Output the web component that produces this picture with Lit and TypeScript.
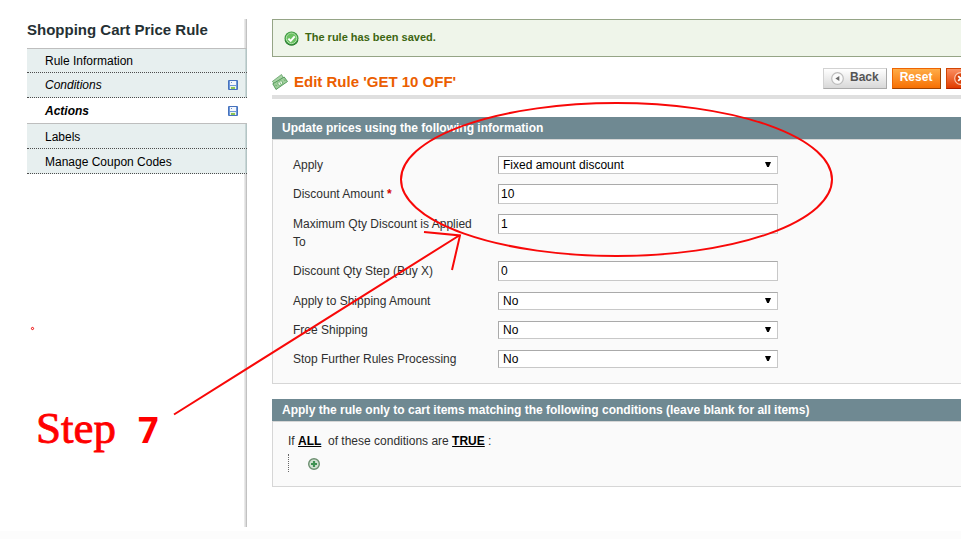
import { LitElement, html, svg, css, nothing } from "lit";
import { customElement } from "lit/decorators.js";
import { classMap } from "lit/directives/class-map.js";

interface Tab {
  label: string;
  changed?: boolean;
  active?: boolean;
}

interface Field {
  id: string;
  label: string;
  required?: boolean;
  value?: string;
  options?: string[];
}

const TABS: Tab[] = [
  { label: "Rule Information" },
  { label: "Conditions", changed: true },
  { label: "Actions", changed: true, active: true },
  { label: "Labels" },
  { label: "Manage Coupon Codes" },
];

const FIELDS: Field[] = [
  { id: "apply", label: "Apply", options: ["Fixed amount discount"] },
  { id: "amount", label: "Discount Amount", required: true, value: "10" },
  { id: "max-qty", label: "Maximum Qty Discount is Applied To", value: "1" },
  { id: "step", label: "Discount Qty Step (Buy X)", value: "0" },
  { id: "shipping", label: "Apply to Shipping Amount", options: ["No", "Yes"] },
  { id: "free", label: "Free Shipping", options: ["No", "Yes"] },
  { id: "stop", label: "Stop Further Rules Processing", options: ["No", "Yes"] },
];

const diskIcon = html`<svg width="10" height="10" viewBox="0 0 10 10" aria-hidden="true">
  <rect width="10" height="10" rx="1" fill="#4672bd" />
  <rect x="1" y="1" width="8" height="8" fill="#6d97da" />
  <rect x="2" y="1" width="6" height="4" fill="#f3f7fd" />
  <rect x="3" y="2" width="1" height="1" fill="#6f8fc9" />
  <rect x="2" y="6" width="6" height="3" fill="#eef5e6" />
  <rect x="3" y="7" width="4" height="2" fill="#8cc556" />
</svg>`;

const checkIcon = html`<svg width="15" height="15" viewBox="0 0 15 15" aria-hidden="true">
  <circle cx="7.5" cy="7.5" r="7" fill="#3c9a3f" />
  <path d="M1.2 9.5a6.6 6.6 0 0 0 12.6 0" fill="none" stroke="#2c7c34" />
  <circle cx="7.5" cy="7.3" r="5.3" fill="#6cc263" stroke="#b9e5b2" />
  <path d="M4.4 7.6l2.3 2.3 4-4.6" fill="none" stroke="#fff" stroke-width="2" />
</svg>`;

const moneyIcon = html`<svg width="16" height="16" viewBox="0 0 16 16" aria-hidden="true">
  <path d="M0.3 7.5L9.5 0.5L11.5 4L3.4 10.5Z" fill="#a8d3a5" stroke="#569a5b" stroke-width=".7" />
  <path d="M0.8 9.8L12.2 3L15.5 7.5L4 15.5Z" fill="#9fcf9b" stroke="#4c9453" stroke-width=".9" />
  <ellipse cx="8.2" cy="9.1" rx="2.6" ry="2" transform="rotate(-33 8.2 9.1)" fill="#e6f4e2" stroke="#5ca461" stroke-width=".7" />
  <path d="M7.8 8.3l.9 1.5M3.6 10.8l1 1.4M12.2 5.6l1 1.3" stroke="#4c9453" stroke-width=".8" />
</svg>`;

const backIcon = html`<svg width="13" height="13" viewBox="0 0 13 13" aria-hidden="true">
  <circle cx="6.5" cy="6.5" r="5.8" fill="#fafafa" stroke="#bdbdbd" stroke-width="1.2" />
  <path d="M8.3 4v5L4.4 6.5z" fill="#6b6b6b" />
</svg>`;

const deleteIcon = html`<svg width="13" height="13" viewBox="0 0 13 13" aria-hidden="true">
  <circle cx="6.5" cy="6.5" r="5.8" fill="#d8430c" stroke="#fcc7b0" stroke-width="1.2" />
  <path d="M4.2 4.2l4.6 4.6M8.8 4.2L4.2 8.8" stroke="#fff" stroke-width="1.8" />
</svg>`;

const addIcon = html`<svg width="12" height="12" viewBox="0 0 12 12" aria-hidden="true">
  <circle cx="6" cy="6" r="5.3" fill="#d3e2d3" stroke="#6c8f70" stroke-width="1.4" />
  <path d="M6 3v6M3 6h6" stroke="#3f9152" stroke-width="2.2" />
</svg>`;

@customElement("app-root")
export class AppRoot extends LitElement {
  static styles = css`
    :host {
      display: block;
      position: relative;
      overflow: hidden;
      background: #fff;
      color: #2f2f2f;
      font: 12px/18px "Liberation Sans", Arial, sans-serif;
    }
    * { box-sizing: border-box; }
    svg { display: block; flex: none; }
    h1, h2, h3, p, ul { margin: 0; padding: 0; }
    .layout {
      display: flex;
      gap: 25px;
      padding: 19px 0 4px 27px;
    }
    .side {
      flex: none;
      width: 220px;
      min-height: 508px;
      background: linear-gradient(90deg, #f0f0f0, #dcdcdc 50%, #b4b4b4) right / 3px 100% no-repeat;
    }
    .side-title {
      height: 29px;
      font-size: 15px;
      line-height: 22px;
      color: #253033;
    }
    .tabs { list-style: none; }
    .tab {
      display: flex;
      align-items: center;
      justify-content: space-between;
      height: 25px;
      padding: 1px 9px 0 18px;
      border-bottom: 1px dotted #4c4c4c;
      background: linear-gradient(90deg, #d3dfdf, #a9bcbc) right / 2px 100% no-repeat #e7efef;
      color: #000;
      text-decoration: none;
    }
    .first { border-top: 1px solid #bebebe; }
    .after {
      height: 26px;
      border-top: 1px solid #bebebe;
    }
    .changed {
      padding-top: 0;
      font-style: italic;
    }
    .active {
      background: #fff;
      border-bottom: 0;
      font-weight: bold;
    }
    .main { flex: 1; min-width: 0; }
    .message {
      display: flex;
      align-items: center;
      gap: 6px;
      height: 38px;
      padding: 0 11px;
      border: 1px solid #95a486;
      border-right: 0;
      background: #eff5ea;
      color: #3d6611;
      font-size: 11px;
      font-weight: bold;
    }
    .message-text { padding-bottom: 2px; }
    .head {
      display: flex;
      align-items: flex-start;
      height: 42px;
      margin-bottom: 18px;
      padding-top: 11px;
      border-bottom: 4px solid #dfdfdf;
    }
    .title {
      display: flex;
      flex: 1;
      align-items: center;
      gap: 6px;
      height: 27px;
      color: #eb5e00;
      font-size: 15px;
    }
    .buttons {
      display: flex;
      flex: 0 0 138px;
      gap: 5px;
      overflow: hidden;
    }
    .btn {
      display: flex;
      flex: none;
      align-items: center;
      gap: 6px;
      height: 21px;
      padding: 0 7px;
      border: 1px solid;
      font: bold 12px/17px "Liberation Sans", Arial, sans-serif;
      color: #fff;
    }
    .btn-text { padding-bottom: 2px; }
    .back {
      border-color: #d2d2d2 #aaa #aaa #d2d2d2;
      background: linear-gradient(#fff, #d8d8d8);
      color: #555;
    }
    .reset {
      padding-right: 8px;
      border-color: #ed6502 #a04300 #a04300 #ed6502;
      background: linear-gradient(#ffac47, #f77003);
    }
    .delete {
      border-color: #d24403 #a92000 #a92000 #d24403;
      background: linear-gradient(#fb8e60, #e03c00);
    }
    .panel-title {
      height: 22px;
      padding: 0 10px;
      background: #6f8992;
      color: #fff;
      font-size: 12px;
      line-height: 22px;
    }
    .panel-body {
      border: 1px solid #d6d6d6;
      border-right: 0;
      background: #fafafa;
    }
    .form {
      display: grid;
      gap: 10px;
      margin-bottom: 15px;
      padding: 15px 20px;
    }
    .row {
      display: grid;
      grid-template-columns: 185px 280px;
      column-gap: 20px;
      align-items: start;
    }
    .label { padding-top: 1px; }
    .required { color: #d40707; font-weight: bold; }
    .control {
      display: block;
      width: 100%;
      height: 20px;
      margin: 0;
      padding: 0 2px;
      border: 1px solid;
      border-color: #aaa #c8c8c8 #c8c8c8 #aaa;
      border-radius: 0;
      background: #fff;
      color: #000;
      font: 12px/18px "Liberation Sans", Arial, sans-serif;
    }
    .picker { position: relative; padding-top: 1px; }
    .select {
      height: 18px;
      padding: 0 4px;
      line-height: 16px;
      appearance: none;
    }
    .caret {
      position: absolute;
      top: 7px;
      right: 7px;
      pointer-events: none;
    }
    .rule { height: 66px; padding: 10px 15px; }
    .rule-link { color: #000; font-weight: bold; }
    .children {
      height: 18px;
      margin-top: 4px;
      padding: 4px 19px;
      border-left: 1px dotted #666;
    }
    .add {
      display: block;
      padding: 0;
      border: 0;
      background: none;
    }
    .footer { height: 8px; background: #fcfcfc; }
    .notes {
      position: absolute;
      top: 0;
      left: 0;
      pointer-events: none;
    }
    .ink { fill: none; stroke: #f80808; stroke-width: 2; }
    .note-word {
      fill: #f00;
      stroke: #f00;
      stroke-width: 0.8;
      font: 45px "Liberation Serif", serif;
    }
    .note-number { fill: #f00; font: bold 36px "Noto Sans", "Open Sans", sans-serif; }
  `;

  private tab(t: Tab, i: number) {
    const classes = {
      tab: true,
      first: i === 0,
      after: !!TABS[i - 1]?.active,
      changed: !!t.changed,
      active: !!t.active,
    };
    return html`<li><a href="#" class=${classMap(classes)}>${t.label}${t.changed ? diskIcon : nothing}</a></li>`;
  }

  private field(f: Field) {
    return html`<div class="row">
      <label class="label" for=${f.id}>${f.label}${f.required ? html` <span class="required">*</span>` : nothing}</label>
      ${f.options
        ? html`<div class="picker">
            <select class="control select" id=${f.id}>${f.options.map((o) => html`<option>${o}</option>`)}</select>
            <svg class="caret" width="6" height="5" viewBox="0 0 6 5" aria-hidden="true"><path d="M0 0h6L3.8 5H2.2z" /></svg>
          </div>`
        : html`<input class="control" type="text" id=${f.id} .value=${f.value ?? ""} />`}
    </div>`;
  }

  private notes() {
    return html`<svg class="notes" width="961" height="539" viewBox="0 0 961 539">
      ${svg`
        <ellipse class="ink" cx="616.5" cy="179.5" rx="215.5" ry="76.5" />
        <path class="ink" d="M174 414.5L460 235M424 232L460 235.5L452 270" />
        <circle cx="32.5" cy="328.5" r="1.1" fill="#fff" stroke="#e00" />
        <text class="note-word" x="36" y="443">Step</text>
        <text class="note-number" x="138" y="443">7</text>
      `}
    </svg>`;
  }

  render() {
    return html`
      <div class="layout">
        <nav class="side">
          <h3 class="side-title">Shopping Cart Price Rule</h3>
          <ul class="tabs">${TABS.map((t, i) => this.tab(t, i))}</ul>
        </nav>
        <main class="main">
          <p class="message">${checkIcon}<span class="message-text">The rule has been saved.</span></p>
          <header class="head">
            <h1 class="title">${moneyIcon}Edit Rule 'GET 10 OFF'</h1>
            <div class="buttons">
              <button class="btn back">${backIcon}<span class="btn-text">Back</span></button>
              <button class="btn reset"><span class="btn-text">Reset</span></button>
              <button class="btn delete" aria-label="Delete">${deleteIcon}</button>
            </div>
          </header>
          <section>
            <h2 class="panel-title">Update prices using the following information</h2>
            <div class="panel-body form">${FIELDS.map((f) => this.field(f))}</div>
          </section>
          <section>
            <h2 class="panel-title">Apply the rule only to cart items matching the following conditions (leave blank for all items)</h2>
            <div class="panel-body rule">
              <p>If <a class="rule-link" href="#">ALL</a>&nbsp; of these conditions are <a class="rule-link" href="#">TRUE</a> :</p>
              <div class="children"><button class="add" aria-label="Add condition">${addIcon}</button></div>
            </div>
          </section>
        </main>
      </div>
      <footer class="footer"></footer>
      ${this.notes()}
    `;
  }
}
